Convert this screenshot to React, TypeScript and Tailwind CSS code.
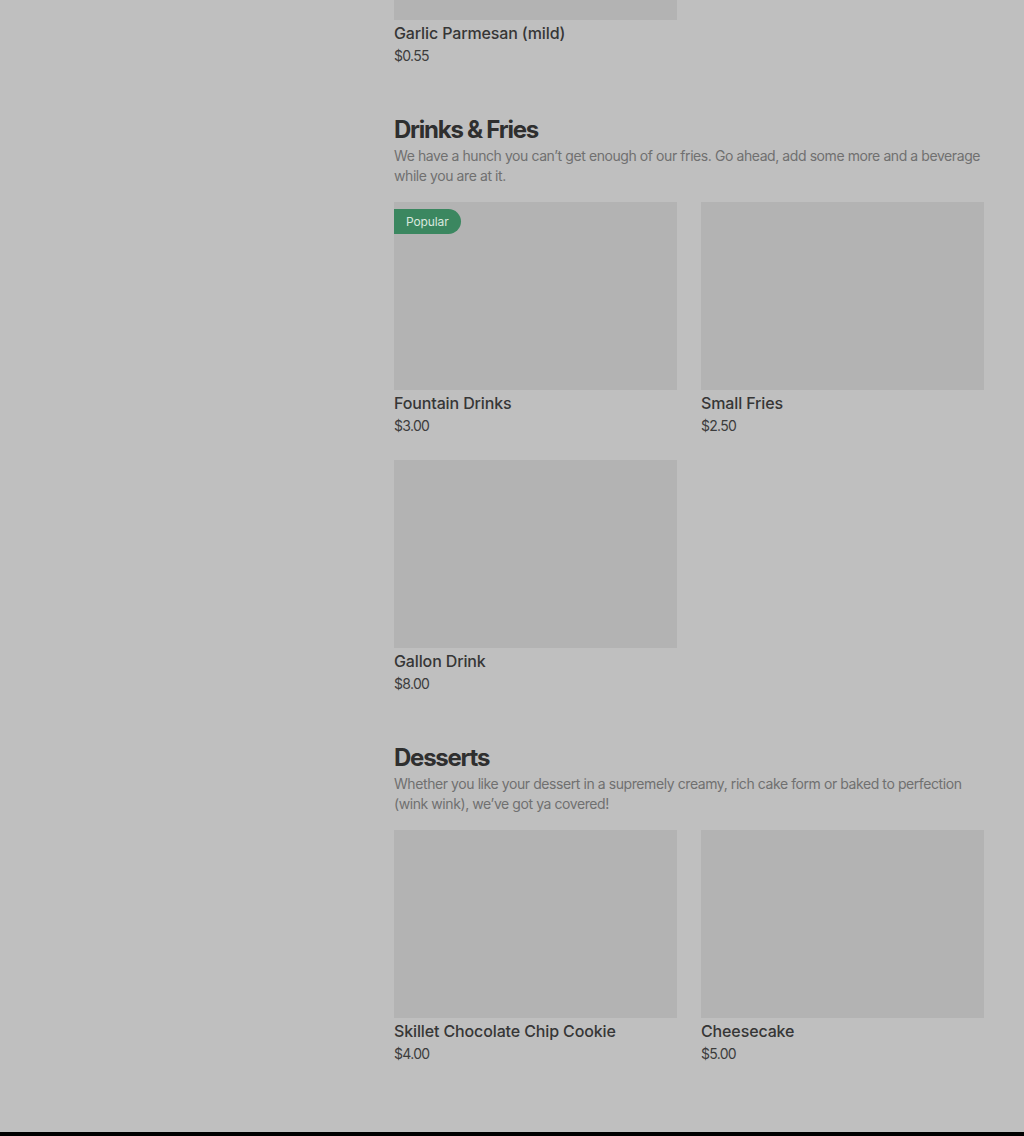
import React from "react";

type Item = { name: string; price: string; popular?: boolean };

function Card({ item }: { item: Item }) {
  return (
    <div className="flex flex-col">
      <div className="relative h-[188px] w-full bg-[#b3b3b3]">
        {item.popular && (
          <div className="absolute left-0 top-[7px] flex h-[25px] items-center rounded-r-full bg-[#3b8760] pl-3 pr-3 text-[12px] tracking-[-0.01em] text-[#d9e8df]">
            Popular
          </div>
        )}
      </div>
      <div className="mt-[3px] text-[16px] font-medium leading-5 tracking-[-0.008em] text-[#363636]">{item.name}</div>
      <div className="mt-[3px] text-[14px] leading-5 tracking-[-0.05em] text-[#3c3c3c]">{item.price}</div>
    </div>
  );
}

function Section({ title, desc, items }: { title: string; desc: string; items: Item[] }) {
  return (
    <div className="mt-12 flex flex-col">
      <h2 className="text-[24px] font-bold leading-8 tracking-[-0.052em] text-[#2f2f2f]">{title}</h2>
      <p className="text-[14px] leading-5 tracking-[-0.03em] text-[#707070]">{desc}</p>
      <div className="mt-4 grid grid-cols-2 gap-x-6 gap-y-6">
        {items.map((it) => (
          <Card key={it.name} item={it} />
        ))}
      </div>
    </div>
  );
}

export default function App() {
  return (
    <div
      className="flex min-h-[1136px] w-full flex-col bg-[#bfbfbf]"
      style={{ fontFamily: "Inter, 'Liberation Sans', sans-serif" }}
    >
      <div className="flex flex-1 justify-start">
        <div className="ml-[394px] w-[590px] pb-[68px]">
          <div className="grid grid-cols-2 gap-x-6">
            <div className="flex flex-col">
              <div className="h-5 w-full bg-[#b3b3b3]" />
              <div className="mt-[3px] text-[16px] font-medium leading-5 tracking-[-0.008em] text-[#363636]">Garlic Parmesan (mild)</div>
              <div className="mt-[3px] text-[14px] leading-5 tracking-[-0.05em] text-[#3c3c3c]">$0.55</div>
            </div>
          </div>
          <Section
            title="Drinks & Fries"
            desc="We have a hunch you can’t get enough of our fries. Go ahead, add some more and a beverage while you are at it."
            items={[
              { name: "Fountain Drinks", price: "$3.00", popular: true },
              { name: "Small Fries", price: "$2.50" },
              { name: "Gallon Drink", price: "$8.00" },
            ]}
          />
          <Section
            title="Desserts"
            desc="Whether you like your dessert in a supremely creamy, rich cake form or baked to perfection (wink wink), we’ve got ya covered!"
            items={[
              { name: "Skillet Chocolate Chip Cookie", price: "$4.00" },
              { name: "Cheesecake", price: "$5.00" },
            ]}
          />
        </div>
      </div>
      <div className="h-1 w-full bg-black" />
    </div>
  );
}
